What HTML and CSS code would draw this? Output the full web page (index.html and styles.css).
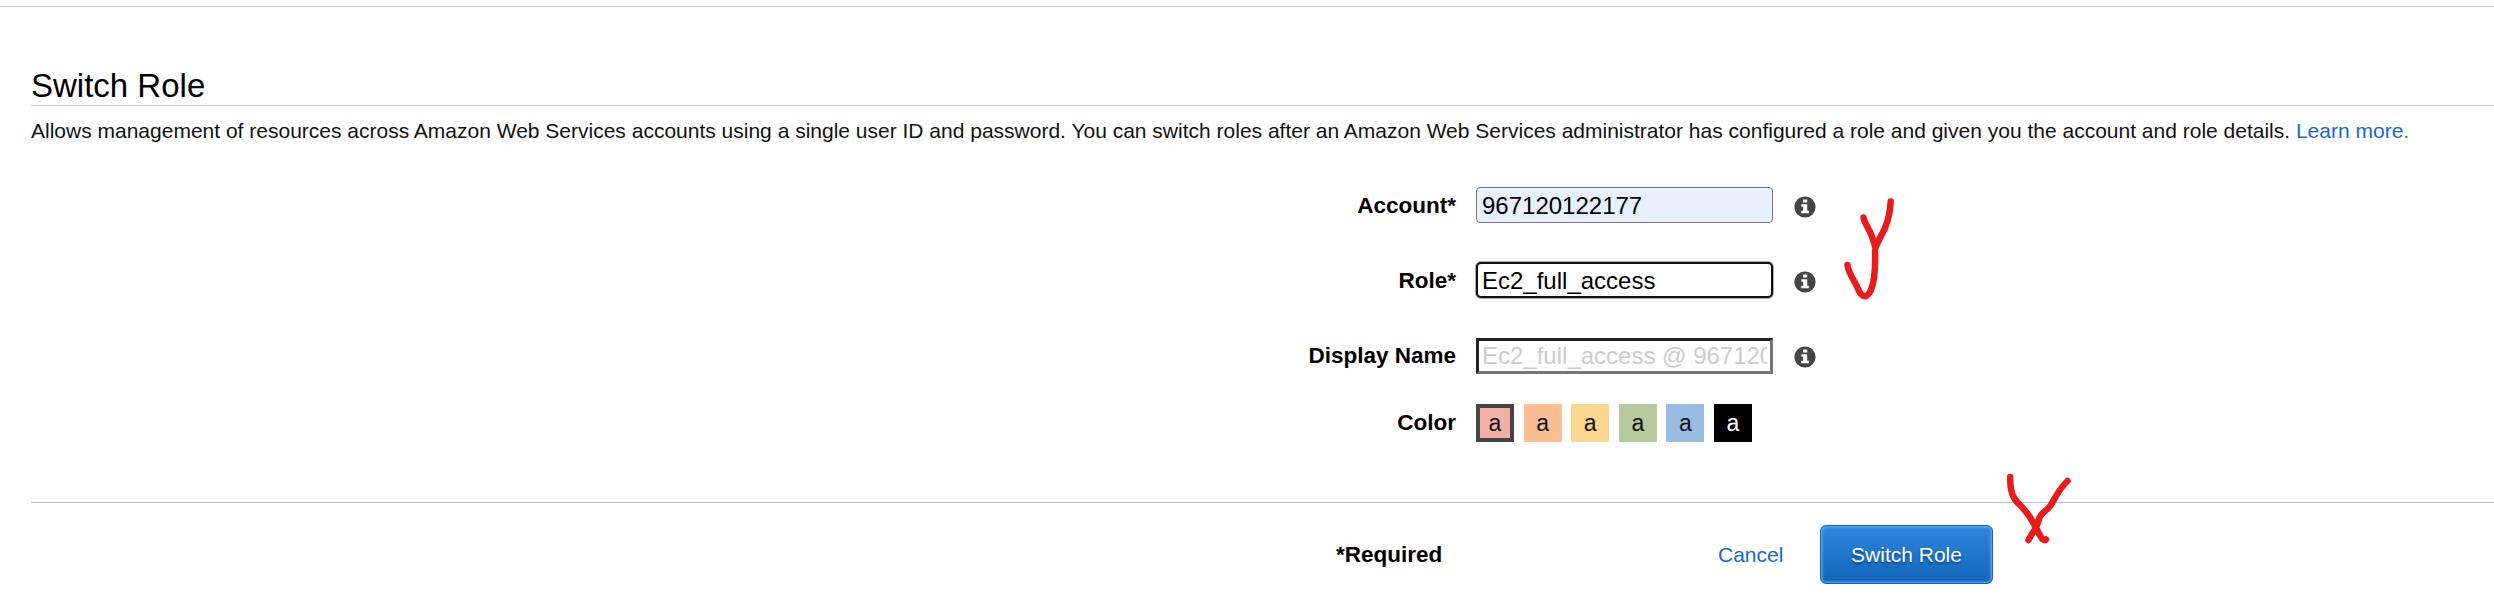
FILE: index.html
```html
<!DOCTYPE html>
<html lang="en">
<head>
<meta charset="utf-8">
<title>Switch Role</title>
<link rel="stylesheet" href="styles.css">
</head>
<body>
<svg class="defs" width="0" height="0">
  <symbol id="info" viewBox="0 0 22 22">
    <circle cx="11" cy="11" r="10.6" fill="#444645"/>
    <path d="M9 3.5h4.2v3H9zM7.4 8.2h5.8v6.6h1.7v2.5H7.2v-2.5h1.9v-4.1H7.4z" fill="#fff"/>
  </symbol>
</svg>
<div class="topbar"></div>
<main class="page">
  <h1 class="title">Switch Role</h1>
  <p class="intro">Allows management of resources across Amazon Web Services accounts using a single user ID and password. You can switch roles after an Amazon Web Services administrator has configured a role and given you the account and role details. <a class="link" href="#">Learn more.</a></p>
  <form class="form">
    <div class="row">
      <label class="label" for="account">Account*</label>
      <input class="field account" id="account" value="967120122177">
      <svg class="info"><use href="#info"/></svg>
    </div>
    <div class="row">
      <label class="label" for="role">Role*</label>
      <input class="field role" id="role" value="Ec2_full_access">
      <svg class="info"><use href="#info"/></svg>
    </div>
    <div class="row optional">
      <label class="label" for="display">Display Name</label>
      <input class="field display" id="display" placeholder="Ec2_full_access @ 967120122177">
      <svg class="info"><use href="#info"/></svg>
    </div>
    <div class="row colors">
      <span class="label">Color</span>
      <div class="swatches">
        <span class="swatch red">a</span>
        <span class="swatch orange">a</span>
        <span class="swatch yellow">a</span>
        <span class="swatch green">a</span>
        <span class="swatch blue">a</span>
        <span class="swatch black">a</span>
      </div>
    </div>
  </form>
  <footer class="footer">
    <span class="required">*Required</span>
    <a class="link cancel" href="#">Cancel</a>
    <button class="submit" type="button">Switch Role</button>
  </footer>
</main>
<svg class="marks" viewBox="0 0 2494 604">
  <path d="M1863.500 217.500C1865 225 1871 231 1873 240C1874 243 1875 245 1875.500 248M1890.700 201.500C1890 216 1887 226 1881 236L1875.500 247M1875 251C1875.500 266 1875 280 1871 290Q1865 302 1859 291C1855 281 1848.500 274 1847.500 265"/>
  <path d="M2010.200 477C2010 492 2013 499 2020 505C2025 510 2031 518 2035 526C2038 531 2040 537 2043 539.500Q2045 541 2046 539.500M2067.500 481C2059 489 2055 498 2051 505C2047 511 2041 512 2039 519C2037 526 2035 530 2032.500 533L2028.500 540"/>
</svg>
</body>
</html>
```

FILE: styles.css
```css
* {
  box-sizing: border-box;
}

body {
  margin: 0;
  height: 604px;
  overflow: hidden;
  position: relative;
  background: #fff;
  color: #000;
  font-family: "Liberation Sans", Arial, sans-serif;
  font-size: 21px;
}

.defs {
  display: block;
}

.topbar {
  height: 7px;
  border-bottom: 1px solid #ccc;
}

.page {
  padding: 60px 0 0 31px;
}

.title {
  margin: 0;
  height: 39px;
  border-bottom: 1px solid #ccc;
  font-size: 33px;
  font-weight: 400;
  line-height: 38px;
}

.intro {
  margin: 13px 0 0;
  line-height: 24px;
  white-space: nowrap;
  color: #111;
}

.link {
  color: #1a6ac1;
  text-decoration: none;
}

.form {
  padding-top: 44px;
}

.row {
  display: flex;
  align-items: center;
  height: 36px;
  margin-bottom: 39px;
}

.label {
  width: 1425px;
  margin-right: 20px;
  padding-top: 2px;
  text-align: right;
  font-size: 22.5px;
  font-weight: 700;
  line-height: 36px;
}

.field {
  width: 297px;
  height: 36px;
  margin: 0;
  padding: 0 3px;
  border: 3px solid #111;
  outline: none;
  background: #fff;
  color: #000;
  font: 24px "Liberation Sans", Arial, sans-serif;
}

.account {
  padding: 2px 5px 0;
  border: 1px solid #767676;
  border-radius: 4px;
  background: #e8f0fe;
}

.role {
  padding: 2px 4px 0;
  border: 2px solid #101010;
  border-radius: 5px;
  box-shadow: 0 0 0 1px #aaa;
}

.optional {
  margin-top: 40px;
}

.row:has(.role) {
  margin-bottom: 0;
}

.display {
  border-color: #222 #767676 #767676 #222;
}

.display::placeholder {
  color: #ccc;
  opacity: 1;
}

.info {
  width: 22px;
  height: 22px;
  margin: 4px 0 0 21px;
}

.optional .label {
  padding-top: 0;
}

.optional .info {
  margin-top: 2px;
}

.colors {
  height: 38px;
  margin: -9px 0 0;
}

.colors .label {
  padding-top: 0;
}

.swatches {
  display: flex;
  gap: 9.6px;
}

.swatch {
  width: 38px;
  height: 38px;
  font-size: 23px;
  line-height: 38px;
  text-align: center;
  color: #111;
}

.red {
  border: 4px solid #444;
  background: #f2b0a9;
  line-height: 30px;
}

.orange { background: #fbbf93; }
.yellow { background: #fad791; }
.green { background: #b7ca9d; }
.blue { background: #99bce3; }

.black {
  background: #000;
  color: #fff;
}

.footer {
  display: flex;
  align-items: center;
  margin-top: 60px;
  padding: 22px 0 0 1305px;
  border-top: 1px solid #bbb;
}

.required {
  width: 382px;
  font-size: 22.5px;
  font-weight: 700;
}

.cancel {
  width: 102px;
}

.submit {
  width: 173px;
  height: 59px;
  padding: 0;
  border: 1px solid #1166bb;
  border-radius: 6px;
  background: linear-gradient(#2f86de, #1166bb);
  box-shadow: inset 0 0 3px 1px #78b0e6;
  color: #fff;
  font: 21px "Liberation Sans", Arial, sans-serif;
  text-shadow: 0 2px 2px rgba(0, 30, 80, 0.5);
}

/* Hand-drawn annotations above the form */
.marks {
  position: absolute;
  top: 0;
  left: 0;
  width: 2494px;
  height: 604px;
  fill: none;
  stroke: #e81c1c;
  stroke-width: 6.5;
  stroke-linecap: round;
  stroke-linejoin: round;
  pointer-events: none;
}
```
